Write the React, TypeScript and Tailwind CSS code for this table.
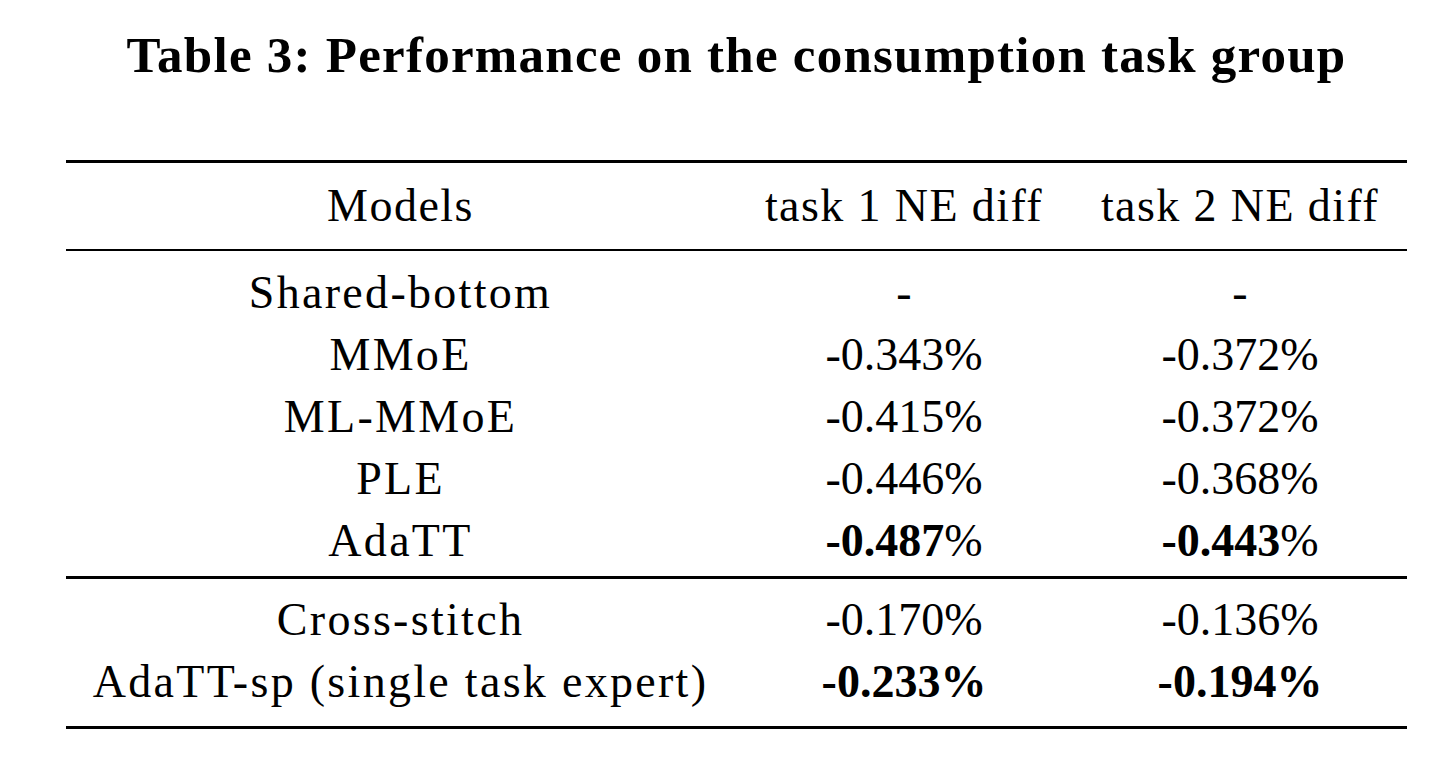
type Row = {
  model: string;
  t1: string;
  t2: string;
  bold?: "number" | "all";
};

const groupA: Row[] = [
  { model: "Shared-bottom", t1: "-", t2: "-" },
  { model: "MMoE", t1: "-0.343", t2: "-0.372" },
  { model: "ML-MMoE", t1: "-0.415", t2: "-0.372" },
  { model: "PLE", t1: "-0.446", t2: "-0.368" },
  { model: "AdaTT", t1: "-0.487", t2: "-0.443", bold: "number" },
];

const groupB: Row[] = [
  { model: "Cross-stitch", t1: "-0.170", t2: "-0.136" },
  { model: "AdaTT-sp (single task expert)", t1: "-0.233", t2: "-0.194", bold: "all" },
];

const cols = "grid grid-cols-[669px_338px_334px] text-center h-[62px] leading-[62px]";

const Value = ({ value, bold }: { value: string; bold?: Row["bold"] }) => {
  if (value === "-") return <span>-</span>;
  if (bold === "all") return <span className="font-bold">{value}%</span>;
  if (bold === "number")
    return (
      <span>
        <span className="font-bold">{value}</span>%
      </span>
    );
  return <span>{value}%</span>;
};

const TableRow = ({ row }: { row: Row }) => (
  <div className={cols}>
    <div className="tracking-[2.3px]">{row.model}</div>
    <div>
      <Value value={row.t1} bold={row.bold} />
    </div>
    <div>
      <Value value={row.t2} bold={row.bold} />
    </div>
  </div>
);

export default function App() {
  return (
    <div className="min-h-[759px] w-[1456px] bg-white text-black font-['Liberation_Serif','Times_New_Roman',serif]">
      <div className="ml-[66px] w-[1341px]">
        <h1 className="pt-[30px] text-center text-[51px] font-bold leading-none tracking-[1.25px]">
          Table 3: Performance on the consumption task group
        </h1>

        <div className="mt-[79px] text-[46px]">
          <div className="h-[3px] bg-black" />
          <div className="pt-[12px] pb-[12px]">
            <div className={cols}>
              <div className="tracking-[1.5px]">Models</div>
              <div className="tracking-[1.4px]">task 1 NE diff</div>
              <div className="tracking-[1.4px]">task 2 NE diff</div>
            </div>
          </div>
          <div className="h-[2px] bg-black" />

          <div className="pt-[11px] pb-[4px]">
            {groupA.map((row) => (
              <TableRow key={row.model} row={row} />
            ))}
          </div>
          <div className="h-[3px] bg-black" />

          <div className="pt-[10px] pb-[13px]">
            {groupB.map((row) => (
              <TableRow key={row.model} row={row} />
            ))}
          </div>
          <div className="h-[3px] bg-black" />
        </div>
      </div>
    </div>
  );
}
